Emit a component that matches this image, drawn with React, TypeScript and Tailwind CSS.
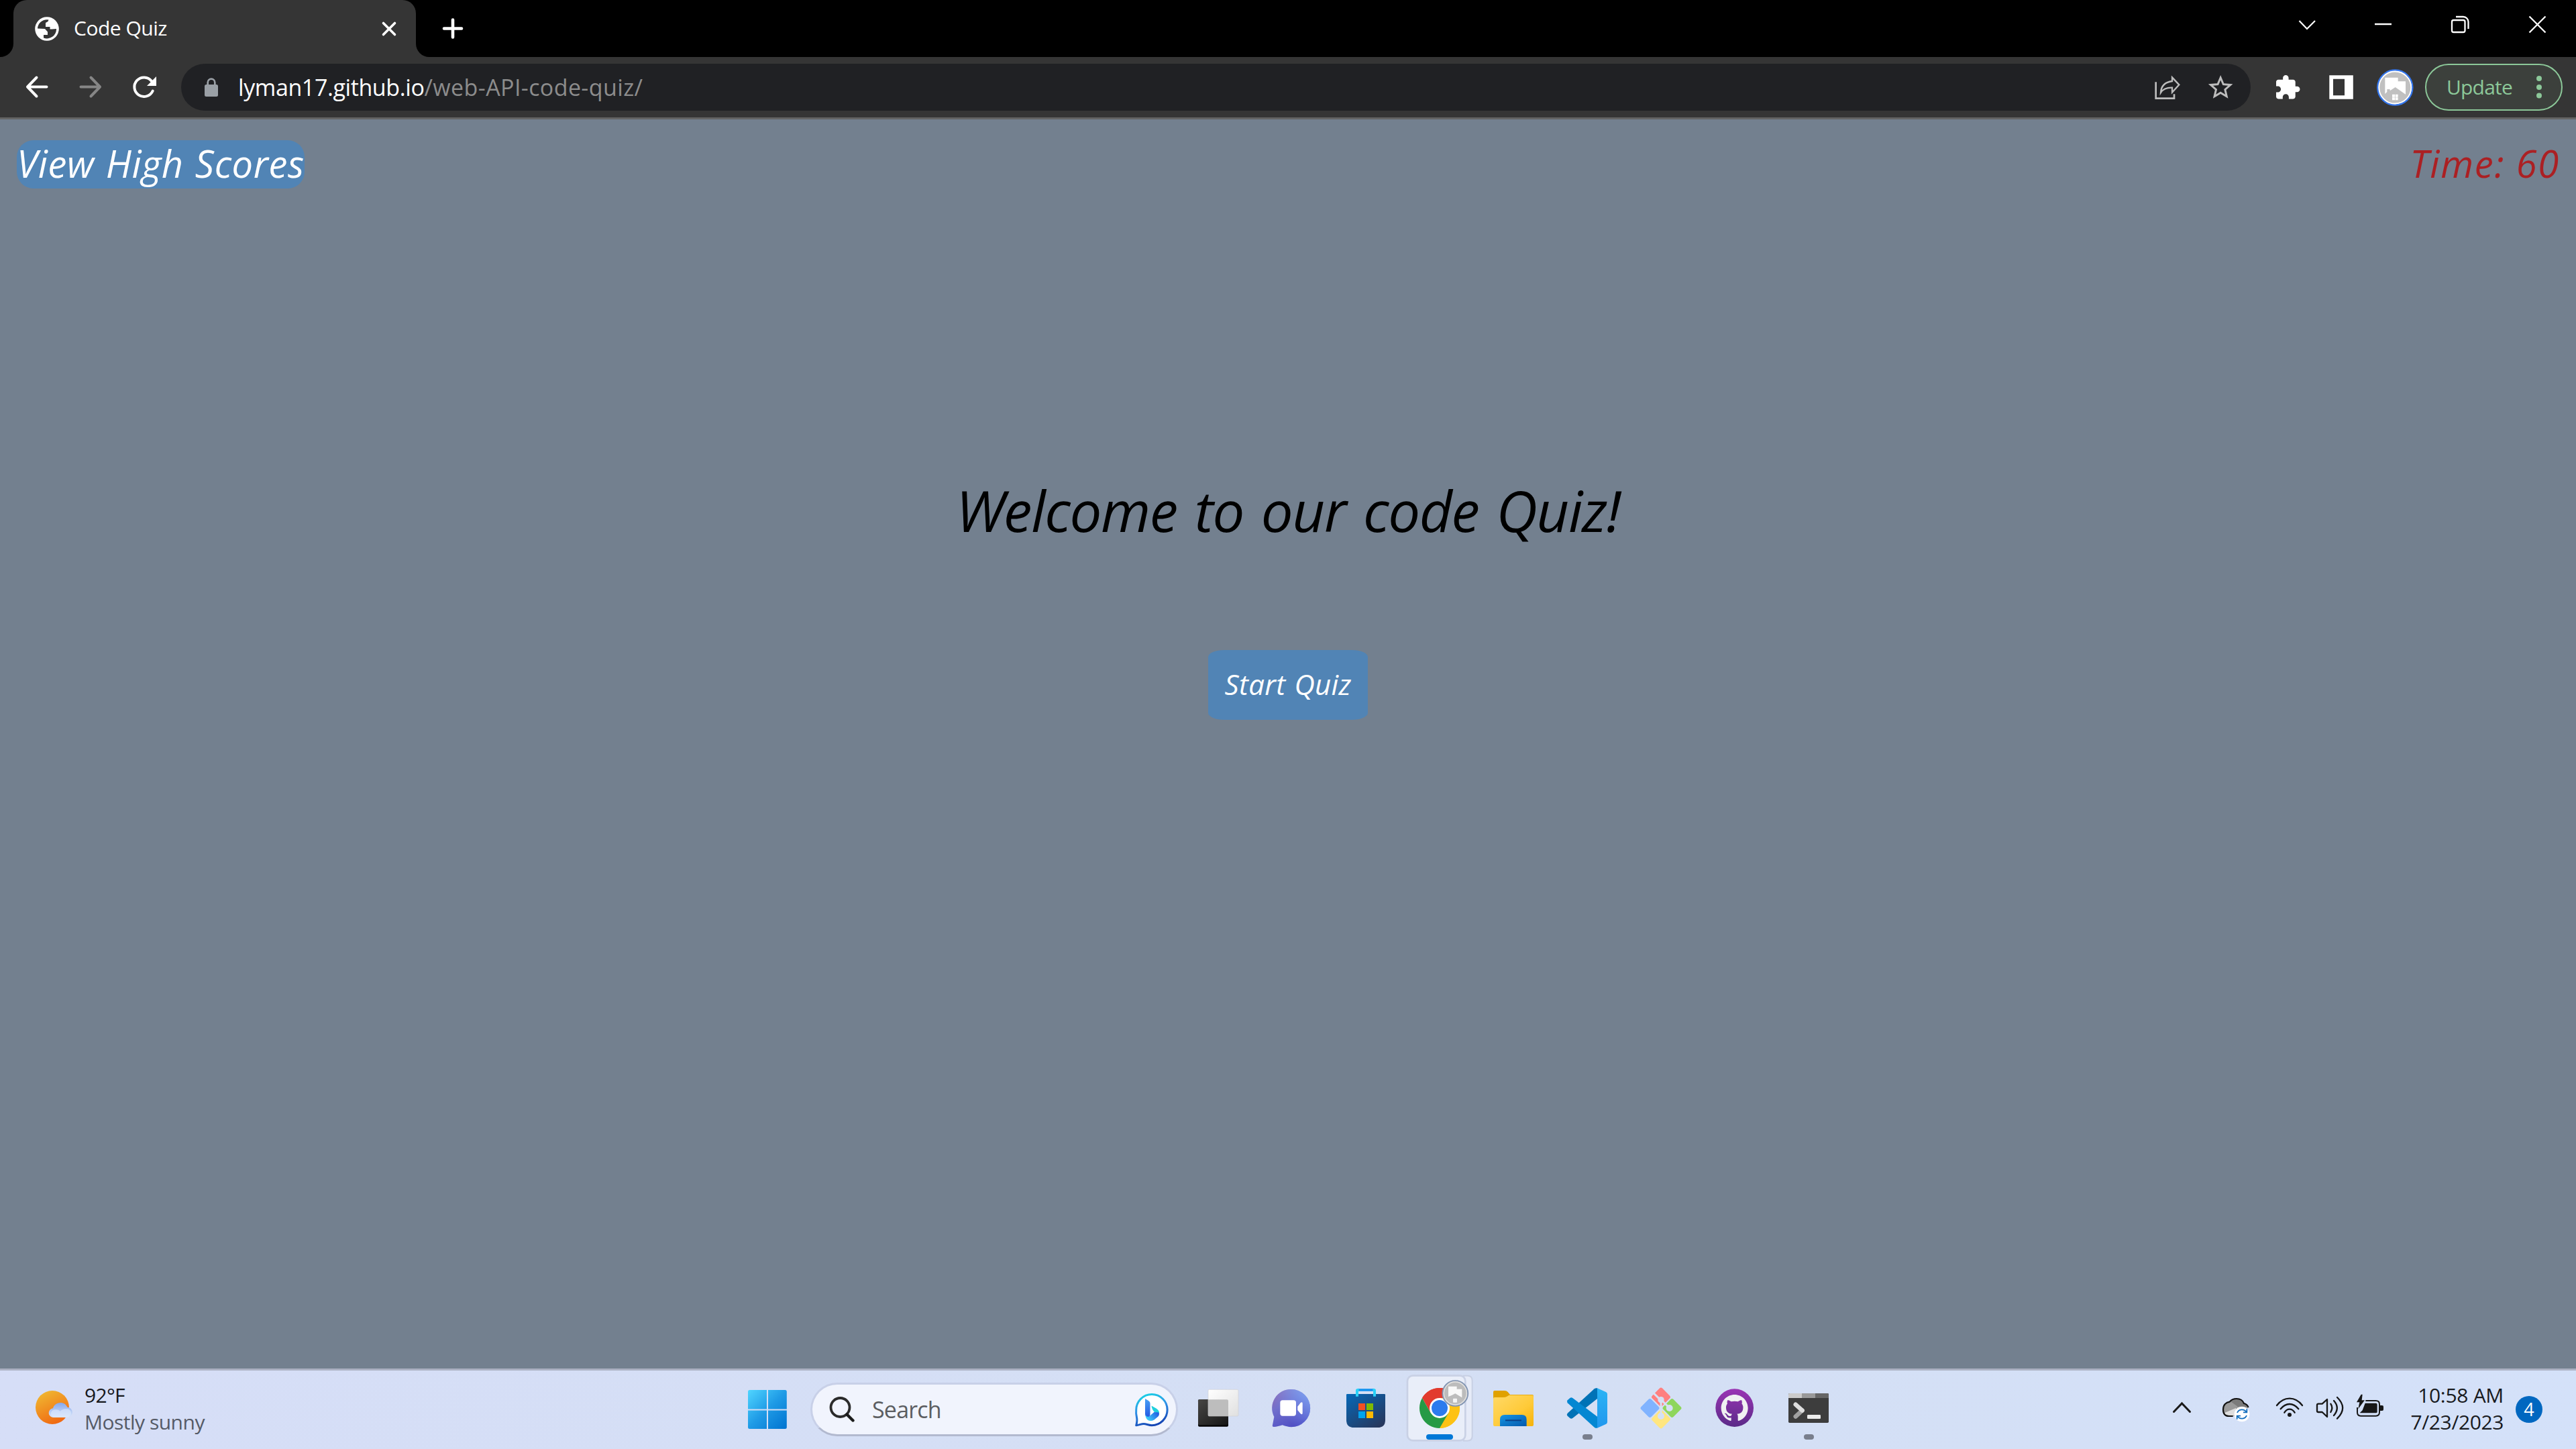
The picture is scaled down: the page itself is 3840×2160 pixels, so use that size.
import React from "react";

type IconProps = { box: string; className: string; children: React.ReactNode };

const Icon = ({ box, className, children }: IconProps) => (
  <svg viewBox={box} className={`block shrink-0 ${className}`} fill="none">
    {children}
  </svg>
);

const CELL = "w-[110px] h-[117px]";

const TabStrip = () => (
  <div className="flex h-[85px] w-full bg-black">
    <div className="relative ml-[20px] flex h-[85px] w-[600px] shrink-0 items-center rounded-t-[20px] bg-[#353535] pl-[32px]">
      <svg viewBox="0 0 20 20" className="absolute bottom-0 -left-[20px] h-[20px] w-[20px]">
        <path d="M20 0V20H0A20 20 0 0 0 20 0z" fill="#353535" />
      </svg>
      <svg viewBox="0 0 20 20" className="absolute -right-[20px] bottom-0 h-[20px] w-[20px]">
        <path d="M0 0V20H20A20 20 0 0 1 0 0z" fill="#353535" />
      </svg>
      <Icon box="52 25 36 36" className="h-[36px] w-[36px]">
        <circle cx="70" cy="43" r="17.8" fill="#fff" />
        <path d="M56 42.5A14 14 0 0 1 70 29.3l2.5.3-1 2.5-3.5 2v6h6.5v3.5h3l6.5-.5A14 14 0 0 1 65 56.5V52h6v-4.5l-4-4.5z" fill="#353535" />
      </Icon>
      <div className="ml-[22px] w-[458px] pb-[1px] text-[30px] leading-[40px] tracking-[-0.5px] whitespace-nowrap text-white">Code Quiz</div>
      <Icon box="0 0 24 24" className="h-[24px] w-[24px]">
        <path d="M3.5 3.5l17 17M20.5 3.5l-17 17" stroke="#fff" strokeWidth="3.6" strokeLinecap="round" />
      </Icon>
    </div>
    <Icon box="655 22 40 40" className="mt-[22px] ml-[35px] h-[40px] w-[40px]">
      <path d="M662 42.5h26M675 29.5v26" stroke="#fff" strokeWidth="4.6" strokeLinecap="round" />
    </Icon>
    <div className="ml-auto flex pt-[16px] pr-[37px]">
      <Icon box="3419 16 40 40" className="mr-[74px] h-[40px] w-[40px]">
        <path d="M3427.5 31l11.5 12 12-12" stroke="#fff" strokeWidth="2.2" />
      </Icon>
      <Icon box="3533 16 40 40" className="mr-[74px] h-[40px] w-[40px]">
        <path d="M3540 36h25" stroke="#fff" strokeWidth="2.5" />
      </Icon>
      <Icon box="3647 16 40 40" className="mr-[76px] h-[40px] w-[40px]">
        <rect x="3655" y="30" width="19.5" height="18" rx="2.5" stroke="#fff" strokeWidth="2.3" />
        <path d="M3661 25h11a7.5 7.5 0 0 1 7.5 7.5V43" stroke="#fff" strokeWidth="2.3" />
      </Icon>
      <Icon box="3763 16 40 40" className="h-[40px] w-[40px]">
        <path d="M3770.5 24.5l24 24M3794.5 24.5l-24 24" stroke="#fff" strokeWidth="2.3" />
      </Icon>
    </div>
  </div>
);

const Toolbar = () => (
  <div className="flex h-[93px] w-full items-start border-b-[3px] border-[#646464] bg-[#353535] pt-[10px]">
    <Icon box="35 95 40 70" className="ml-[35px] h-[70px] w-[40px]">
      <path d="M54.5 115.5L41 129.5l13.5 14M41 129.5h28.5" stroke="#fff" strokeWidth="4" strokeLinecap="round" strokeLinejoin="round" />
    </Icon>
    <Icon box="115 95 40 70" className="ml-[40px] h-[70px] w-[40px]">
      <path d="M135.5 115.5L149 129.5l-13.5 14M149 129.5h-28.5" stroke="#868686" strokeWidth="4" strokeLinecap="round" strokeLinejoin="round" />
    </Icon>
    <Icon box="195 95 40 70" className="ml-[40px] h-[70px] w-[40px]">
      <path d="M227.7 135.5A14.3 14.3 0 1 1 226 121" stroke="#fff" strokeWidth="4" strokeLinecap="round" />
      <path d="M233 114v14h-14z" fill="#fff" />
    </Icon>
    <div className="ml-[35px] flex h-[70px] w-[3085px] items-center rounded-full bg-[#202124] pl-[33px]">
      <Icon box="303 113 24 34" className="h-[34px] w-[24px]">
        <rect x="305" y="126" width="20" height="18" rx="2.5" fill="#9aa0a6" />
        <path d="M309.7 128v-5a5.3 5.3 0 0 1 10.6 0v5" stroke="#9aa0a6" strokeWidth="2.7" />
      </Icon>
      <div className="ml-[28px] w-[2848px] text-[34px] leading-[50px] whitespace-nowrap">
        <span className="tracking-[-0.4px] text-white">lyman17.github.io</span>
        <span className="tracking-[0.4px] text-[#8c8c8c]">/web-API-code-quiz/</span>
      </div>
      <Icon box="3190 80 167 100" className="-ml-[13px] h-[100px] w-[167px]">
        <g transform="translate(3192 80) scale(.33333)">
          <path d="M71 127v73h82v-19" stroke="#bdbdbd" strokeWidth="8" />
          <path d="M144 106l31 33-31 34v-21c-26-1-40 5-51 22 2-31 18-47 51-51z" stroke="#bdbdbd" strokeWidth="7" />
        </g>
        <path transform="translate(3290.2 108.4) scale(1.83)" d="M22 9.24l-7.19-.62L12 2 9.19 8.63 2 9.24l5.46 4.73L5.82 21 12 17.27 18.18 21l-1.63-7.03L22 9.24zM12 15.4l-3.76 2.27 1-4.28-3.32-2.88 4.38-.38L12 6.1l1.71 4.04 4.38.38-3.32 2.88 1 4.28L12 15.4z" fill="#bdbdbd" />
      </Icon>
    </div>
    <Icon box="3385 95 50 70" className="ml-[30px] h-[70px] w-[50px]">
      <path transform="translate(3389.6 110.2) scale(1.69)" d="M20.5 11H19V7c0-1.1-.9-2-2-2h-4V3.5C13 2.12 11.88 1 10.5 1S8 2.12 8 3.5V5H4c-1.1 0-1.99.9-1.99 2v3.8H3.5c1.49 0 2.7 1.21 2.7 2.7s-1.21 2.7-2.7 2.7H2V20c0 1.1.9 2 2 2h3.8v-1.5c0-1.49 1.21-2.7 2.7-2.7 1.49 0 2.7 1.21 2.7 2.7V22H17c1.1 0 2-.9 2-2v-4h1.5c1.38 0 2.5-1.12 2.5-2.5S21.88 11 20.5 11z" fill="#fff" />
    </Icon>
    <Icon box="3465 95 50 70" className="ml-[30px] h-[70px] w-[50px]">
      <path fillRule="evenodd" d="M3472.3 112.3h35.5v35.5h-35.5zM3478 117.7v24.6h17v-24.6z" fill="#fff" />
    </Icon>
    <Icon box="3540 95 60 70" className="ml-[25px] h-[70px] w-[60px]">
      <circle cx="3570.3" cy="130.5" r="26" fill="#c0c0c0" stroke="#3577ee" strokeWidth="2.4" />
      <circle cx="3570.3" cy="130.5" r="24" stroke="#fff" strokeWidth="1.8" />
      <g transform="translate(3190 80) scale(.33333)" fill="#fff">
        <path d="M1096 107h58v17h34v58l-46-32-24 16v-7h-13v12l-9 9z" />
        <path d="M1128 182h12v12h-12zM1142 182h12v12h-12zM1128 196h12v12h-12zM1142 196h12v12h-12z" />
      </g>
    </Icon>
    <div className="ml-[15px] flex h-[70px] w-[205px] items-center rounded-full border-[2.5px] border-[#8cc899] bg-[#3c403c] pl-[30px]">
      <div className="w-[100px] pb-[1px] text-[30px] leading-[40px] tracking-[-0.8px] whitespace-nowrap text-[#8cc899]">Update</div>
      <Icon box="0 0 16 50" className="ml-[30px] h-[50px] w-[16px]">
        <circle cx="8" cy="12" r="4" fill="#8cc899" />
        <circle cx="8" cy="25" r="4" fill="#8cc899" />
        <circle cx="8" cy="37.5" r="4" fill="#8cc899" />
      </Icon>
    </div>
  </div>
);

const QuizPage = () => (
  <main className="flex h-[1862px] w-full flex-col bg-[#73808f] pt-[31px]">
    <div className="flex h-[72px] justify-between pr-[24px] pl-[25px] text-[56px] leading-[68px] font-medium whitespace-nowrap italic">
      <div className="flex h-[72px] w-[429px] justify-center rounded-[25px] bg-[#5184b5] tracking-[0.6px] text-white [word-spacing:2px]">View High Scores</div>
      <div className="tracking-[1.8px] text-[#ab2023]">Time: 60</div>
    </div>
    <h1 className="mt-[419px] h-[120px] text-center text-[85px] leading-[120px] tracking-[-1.3px] whitespace-nowrap text-black italic [word-spacing:5px]">Welcome to our code Quiz!</h1>
    <div className="mt-[149px] flex justify-center">
      <button className="block h-[104px] w-[238px] rounded-[10%] bg-[#5184b5] pb-[3px] text-center text-[42px] leading-[101px] font-medium tracking-[0.3px] whitespace-nowrap text-white italic [word-spacing:2px]">Start Quiz</button>
    </div>
  </main>
);

const SearchBox = () => (
  <div className="ml-[9px] flex h-[80px] w-[548px] shrink-0 items-center rounded-full border-[3px] border-[#c8d0e8] border-b-[#b2b9cf] bg-[#f1f4fd] pl-[24px]">
    <Icon box="1235 2080 40 40" className="h-[40px] w-[40px]">
      <circle cx="1252.5" cy="2097" r="14" stroke="#2b2b2b" strokeWidth="3.8" />
      <path d="M1262.5 2107.5l9 9" stroke="#1b1b1b" strokeWidth="4.4" strokeLinecap="round" />
    </Icon>
    <div className="ml-[25px] w-[389px] text-[34px] leading-[48px] tracking-[-0.8px] whitespace-nowrap text-[#5b5d61]">Search</div>
    <Icon box="1690 2073 54 54" className="h-[54px] w-[54px]">
      <defs>
        <linearGradient id="bingRing" gradientUnits="userSpaceOnUse" x1="1697" y1="2078" x2="1712" y2="2126">
          <stop stopColor="#19d8e6" />
          <stop offset=".5" stopColor="#2f8fe6" />
          <stop offset="1" stopColor="#1546b5" />
        </linearGradient>
        <linearGradient id="bingB" gradientUnits="userSpaceOnUse" x1="1708" y1="2084" x2="1714" y2="2114">
          <stop stopColor="#4aa3f5" />
          <stop offset="1" stopColor="#1f51e0" />
        </linearGradient>
        <linearGradient id="bingC" gradientUnits="userSpaceOnUse" x1="1714" y1="2116" x2="1729" y2="2104">
          <stop stopColor="#3cc8f8" />
          <stop offset="1" stopColor="#1f4fe0" />
        </linearGradient>
      </defs>
      <path d="M1718 2077.5a23 23 0 0 1 0 46.2c-5 0-8-2.2-12-2.2-4 0-7 1.8-11.3 2.3 1.3-5 1.5-9 .8-12A30 30 0 0 1 1694.7 2101a23.3 23.3 0 0 1 23.3-23.5z" fill="#fff" stroke="url(#bingRing)" strokeWidth="3" strokeLinejoin="round" />
      <path d="M1708 2084l5 3q2.5 1.5 2.5 4v16q0 5-3.5 5t-4-5z" fill="url(#bingB)" />
      <path d="M1717.500 2094.500l7 4q5 3 4.500 8l-7-2.500q-4-4-4.500-9.500z" fill="#1fd0dd" />
      <path d="M1708.500 2108q2 4.500 6 2l7-6 6.500.5q2 3-.5 6l-6 5q-5.500 3-10 0-3-2.500-3-7.500z" fill="url(#bingC)" />
    </Icon>
  </div>
);

const TaskIcons = () => (
  <>
    <Icon box="1761 2043 110 117" className={`ml-[5px] ${CELL}`}>
      <defs>
        <linearGradient id="tv" x1="0" y1="0" x2="1" y2="1">
          <stop stopColor="#484745" />
          <stop offset="1" stopColor="#151515" />
        </linearGradient>
        <linearGradient id="tvW" x1="0" y1="0" x2="1" y2="1">
          <stop stopColor="#fff" />
          <stop offset="1" stopColor="#e0e0e0" />
        </linearGradient>
      </defs>
      <g transform="translate(1760 2030) scale(.33333)">
        <rect x="78" y="172" width="135" height="121" rx="6" fill="#050505" />
        <rect x="78" y="171" width="135" height="115" rx="6" fill="url(#tv)" />
        <rect x="123" y="127" width="135" height="119" rx="5" fill="url(#tvW)" stroke="#d0d0d4" strokeWidth="2" />
        <path d="M123 172h84q6 0 6 6v68h-85q-5 0-5-5z" fill="#bdbdbd" />
      </g>
    </Icon>
    <Icon box="1871 2043 110 117" className={CELL}>
      <defs>
        <linearGradient id="chat" x1="0" y1="0" x2=".5" y2="1">
          <stop stopColor="#9b68a8" />
          <stop offset=".45" stopColor="#7170cc" />
          <stop offset="1" stopColor="#5150c4" />
        </linearGradient>
        <linearGradient id="chatHi" x1="1" y1="0" x2=".3" y2=".7">
          <stop stopColor="#80aaf5" />
          <stop offset="1" stopColor="#6f8df0" stopOpacity="0" />
        </linearGradient>
      </defs>
      <g transform="translate(1760 2030) scale(.33333)">
        <path d="M495 126a84 84 0 0 1 0 169c-14 0-26-4-40-9-13 4-26 8-38 8-6 0-8-3-6-9l7-36A84 84 0 0 1 495 126z" fill="url(#chat)" />
        <path d="M495 126a84 84 0 0 1 0 169c-14 0-26-4-40-9l-37-37A84 84 0 0 1 495 126z" fill="url(#chatHi)" />
        <rect x="445" y="175" width="71" height="70" rx="11" fill="#fff" />
        <path d="M523 203l13-16q9-7 9 3v42q0 10-9 3l-13-16z" fill="#fff" />
      </g>
    </Icon>
    <Icon box="1981 2043 110 117" className={CELL}>
      <defs>
        <linearGradient id="store" x1="0" y1="0" x2=".8" y2="1">
          <stop stopColor="#0668b8" />
          <stop offset="1" stopColor="#27385e" />
        </linearGradient>
      </defs>
      <g transform="translate(1760 2030) scale(.33333)">
        <path d="M745 147h166q4 0 4 4v112q0 34-34 34H775q-34 0-34-34V151q0-4 4-4z" fill="url(#store)" />
        <path d="M795 129h67" stroke="#1493f0" strokeWidth="11" />
        <path d="M789 158v-28q0-2 8-2M867 158v-28q0-2-8-2" stroke="#2ad2f8" strokeWidth="12" />
        <path d="M795 189h30v30h-30z" fill="#f25022" />
        <path d="M831 189h30v30h-30z" fill="#7fba00" />
        <path d="M795 225h30v30h-30z" fill="#00a4ef" />
        <path d="M831 225h30v30h-30z" fill="#ffb900" />
      </g>
    </Icon>
    <Icon box="2091 2043 110 117" className={CELL}>
      <g transform="translate(1760 2030) scale(.33333)">
        <path d="M1266 65h16q22 0 22 22v249q0 20-22 20h-16z" fill="#e6ebf8" stroke="#c8d0e4" strokeWidth="6" />
        <rect x="1014" y="65" width="259" height="290" rx="24" fill="#e9eef9" stroke="#c9d1e5" strokeWidth="8" />
        <path d="M1158 210L1080 165A90 90 0 0 1 1236 165z" fill="#e23b2e" />
        <path d="M1158 210L1236 165A90 90 0 0 1 1158 300z" fill="#fdc214" />
        <path d="M1158 165h78A90 90 0 0 0 1080 165l39 68z" fill="#e23b2e" />
        <path d="M1236 165h-78l39 68-39 67A90 90 0 0 0 1236 165z" fill="#fdc214" />
        <path d="M1080 165A90 90 0 0 0 1158 300l39-67-78 0z" fill="#269a45" />
        <circle cx="1158" cy="210" r="45" fill="#fff" />
        <circle cx="1158" cy="210" r="36" fill="#2c7bee" />
        <circle cx="1228" cy="144" r="57" fill="#bcbcbc" stroke="#7f93b3" strokeWidth="5" />
        <circle cx="1228" cy="144" r="51" stroke="#e2e2e2" strokeWidth="4" />
        <path d="M1197 113h38v12h23v38l-30-18-16 8-15 6z" fill="#f8f8f8" />
        <rect x="1218" y="167" width="18" height="18" rx="3" fill="#f4f4f4" />
        <rect x="1098" y="327" width="120" height="24" rx="12" fill="#0078d7" />
      </g>
    </Icon>
    <Icon box="2201 2043 110 117" className={CELL}>
      <defs>
        <linearGradient id="fold" x1="0" y1="0" x2="1" y2="1">
          <stop stopColor="#ffd968" />
          <stop offset=".6" stopColor="#ffca38" />
          <stop offset="1" stopColor="#f5b20a" />
        </linearGradient>
        <linearGradient id="foldB" x1="0" y1="0" x2="1" y2="1">
          <stop stopColor="#1496e4" />
          <stop offset="1" stopColor="#0458ac" />
        </linearGradient>
      </defs>
      <g transform="translate(2230 2030) scale(.33333)">
        <path d="M-12 180v-42q0-6 6-6H38q10 0 15 6l10 12h99q6 0 6 6v24z" fill="#e0a100" />
        <path d="M-12 168q0-6 6-6H32q11 0 17-4l10-6h103q6 0 6 6v127q0 6-6 6H-6q-6 0-6-6z" fill="url(#fold)" />
        <path d="M18 291v-30q0-21 21-21h77q21 0 21 21v30z" fill="url(#foldB)" />
        <path d="M42 265h72" stroke="#0a3f86" strokeWidth="6" />
      </g>
    </Icon>
    <Icon box="2311 2043 110 117" className={CELL}>
      <defs>
        <linearGradient id="vs" x1="0" y1="0" x2="0" y2="1">
          <stop stopColor="#2ab4f5" />
          <stop offset="1" stopColor="#2197ee" />
        </linearGradient>
      </defs>
      <g transform="translate(2230 2030) scale(.33333)">
        <path d="M320 233L440 124q6-5 13-3v47L343 255q-6 4-12 0l-11-10q-5-6 0-12z" fill="#0072b6" />
        <path d="M320 187L440 296q6 5 13 3v-51L343 165q-6-4-12 0l-11 10q-5 6 0 12z" fill="#0487d2" />
        <path d="M453 121l40 18q5 3 5 8v126q0 5-5 8l-40 18z" fill="url(#vs)" />
        <rect x="387" y="327" width="45" height="24" rx="12" fill="#797f8d" />
      </g>
    </Icon>
    <Icon box="2421 2043 110 117" className={CELL}>
      <g transform="translate(2230 2030) scale(.33333)">
        <g transform="translate(738 210) rotate(45)">
          <rect x="-67" y="-67" width="64" height="64" rx="9" fill="#ff8080" />
          <rect x="3" y="-67" width="64" height="64" rx="9" fill="#8ed65c" />
          <rect x="-67" y="3" width="64" height="64" rx="9" fill="#80b3ff" />
          <rect x="3" y="3" width="64" height="64" rx="9" fill="#ffe680" />
        </g>
        <g stroke="#d5e0f4" strokeWidth="9">
          <path d="M704 142l34 34M738 170v72M742 176l33 33" />
        </g>
        <circle cx="738" cy="173" r="14" fill="#d5e0f4" />
        <circle cx="776" cy="210" r="15" fill="#d5e0f4" />
        <circle cx="738" cy="246" r="15" fill="#d5e0f4" />
      </g>
    </Icon>
    <Icon box="2531 2043 110 117" className={CELL}>
      <defs>
        <linearGradient id="gh" x1="0" y1="0" x2="0" y2="1">
          <stop stopColor="#9a34b4" />
          <stop offset="1" stopColor="#5a2a88" />
        </linearGradient>
      </defs>
      <g transform="translate(2230 2030) scale(.33333)">
        <circle cx="1067" cy="209" r="85" fill="url(#gh)" />
        <path transform="translate(1007 150) scale(7.5)" d="M8 0C3.58 0 0 3.58 0 8c0 3.54 2.29 6.53 5.47 7.59.4.07.55-.17.55-.38 0-.19-.01-.82-.01-1.49-2.01.37-2.53-.49-2.69-.94-.09-.23-.48-.94-.82-1.13-.28-.15-.68-.52-.01-.53.63-.01 1.08.58 1.23.82.72 1.21 1.87.87 2.33.66.07-.52.28-.87.51-1.07-1.78-.2-3.64-.89-3.64-3.95 0-.87.31-1.59.82-2.15-.08-.2-.36-1.02.08-2.12 0 0 .67-.21 2.2.82.64-.18 1.32-.27 2-.27.68 0 1.36.09 2 .27 1.53-1.04 2.2-.82 2.2-.82.44 1.1.16 1.92.08 2.12.51.56.82 1.27.82 2.15 0 3.07-1.87 3.75-3.65 3.95.29.25.54.73.54 1.48 0 1.07-.01 1.93-.01 2.2 0 .21.15.46.55.38A8.013 8.013 0 0 0 16 8c0-4.42-3.58-8-8-8z" fill="#f0f0f2" />
      </g>
    </Icon>
    <Icon box="2641 2043 110 117" className={CELL}>
      <g transform="translate(2230 2030) scale(.33333)">
        <rect x="1308" y="144" width="180" height="132" rx="5" fill="#3d3d3d" />
        <path d="M1313 144h55v21h-60v-16q0-5 5-5z" fill="#cbcbcb" />
        <path d="M1368 144h60v21h-60z" fill="#999" />
        <path d="M1428 144h55q5 0 5 5v16h-60z" fill="#666" />
        <path d="M1340 248l30-28" stroke="#a2a2a2" strokeWidth="19" strokeLinecap="round" />
        <path d="M1340 194l30 27" stroke="#dedede" strokeWidth="19" strokeLinecap="round" />
        <rect x="1392" y="240" width="60" height="18" rx="4" fill="#ececec" />
        <rect x="1377" y="327" width="45" height="24" rx="12" fill="#797f8d" />
      </g>
    </Icon>
  </>
);

const Tray = () => (
  <div className="flex h-[117px] shrink-0 items-center">
    <Icon box="3229 2043 48 117" className="h-[117px] w-[48px]">
      <path d="M3240.5 2105.5l12-12.5 12 12.5" stroke="#1a1a1a" strokeWidth="3" strokeLinecap="round" />
    </Icon>
    <Icon box="3305 2043 60 117" className="ml-[28px] h-[117px] w-[60px]">
      <g transform="translate(3220 2050) scale(.33333)">
        <path d="M308 186c-18 0-26-12-26-30 0-20 13-32 29-34 8-10 19-14 31-14 16 0 28 8 33 21 10 3 17 9 20 18l-40 39z" fill="#9a9a9a" />
        <path d="M316 121c8-9 17-12 26-12 16 0 28 8 33 21 8 2 14 6 18 12l-30 14-26-20z" fill="#7b7b7b" />
        <path d="M287 172l52-22 10 34h-41c-11 0-18-4-21-12z" fill="#dedede" />
        <path d="M326 186h-18c-18 0-26-12-26-30 0-20 13-32 29-34 8-10 19-14 31-14 16 0 28 8 33 21 10 3 17 9 20 18" stroke="#111" strokeWidth="6.5" />
        <circle cx="366" cy="177" r="34" fill="#fff" />
        <path d="M345 171c6-16 30-20 41-3M387 183c-6 16-30 20-41 3" stroke="#0f6cbd" strokeWidth="5.5" />
        <path d="M388 154v15h-16M344 200v-15h16" stroke="#0f6cbd" strokeWidth="5.5" />
      </g>
    </Icon>
    <Icon box="3385 2043 180 117" className="ml-[20px] h-[117px] w-[180px]">
      <g transform="translate(3220 2050) scale(.33333)" stroke="#171717" strokeWidth="7" strokeLinecap="round">
        <path d="M522 138q24-31 57-31t57 31M539 154q18-22 40-22t40 22M556 170q9-15 23-15t23 15" />
        <circle cx="579" cy="180" r="9" fill="#171717" stroke="none" />
        <path d="M747 111v78l-22-21h-17q-6 0-6-6v-25q0-6 6-6h17z" strokeLinejoin="round" />
        <path d="M763 131q12 18 0 37M777 117q29 32 0 66M792 102q49 47 0 95" />
        <path d="M919 117h46q16 0 16 16v36q0 16-16 16h-68q-15 0-15-16v-22" strokeLinecap="butt" strokeWidth="6" />
        <path d="M984 138h9q6 0 6 6v12q0 6-6 6h-9z" fill="#171717" stroke="none" />
        <path d="M917 128h48q6 0 6 6v33q0 5-6 5h-72l12-12z" fill="#171717" stroke="none" />
        <path d="M899 89l-20 35h13l-6 30 29-39h-13l3-26z" fill="#171717" stroke="none" />
      </g>
    </Icon>
    <div className="w-[167px] pb-[2px] text-right text-[30px] leading-[40px] whitespace-nowrap text-[#181a1e]">
      <div className="tracking-[-0.3px]">10:58 AM</div>
      <div className="tracking-[-0.4px]">7/23/2023</div>
    </div>
    <div className="mr-[50px] ml-[18px] flex h-[40px] w-[40px] items-center justify-center rounded-full bg-[#0067c0] pb-[1px] text-[27px] leading-none text-white">4</div>
  </div>
);

const Taskbar = () => (
  <div className="h-[120px] w-full border-t-[3px] border-[#abb1c2] bg-linear-to-r from-[#d6def7] via-[#d4dff4] via-60% to-[#d4e1f9]">
    <div className="flex h-[117px] w-full items-center pb-[2px]">
      <Icon box="50 2043 62 117" className="ml-[50px] h-[117px] w-[62px]">
        <defs>
          <linearGradient id="sun" x1=".2" y1="0" x2=".7" y2="1">
            <stop stopColor="#f0b932" />
            <stop offset="1" stopColor="#f06510" />
          </linearGradient>
          <linearGradient id="cloud" x1="0" y1="0" x2="0" y2="1">
            <stop stopColor="#86a8ec" />
            <stop offset="1" stopColor="#d9e6fb" />
          </linearGradient>
        </defs>
        <g transform="translate(0 2031) scale(.33333)">
          <circle cx="234" cy="204" r="75" fill="url(#sun)" />
          <path d="M240 249a20 20 0 0 1-3-41c3-14 16-25 33-25 15 0 26 8 31 20a23 23 0 0 1 0 46z" fill="url(#cloud)" />
          <path d="M245 248a17 17 0 0 1 0-34q15-2 24 7 12-13 31-10a18 18 0 0 1 0 36z" fill="#dce8fc" opacity=".65" />
        </g>
      </Icon>
      <div className="ml-[14px] w-[963px] shrink-0 pb-[2px] text-[30px] leading-[40px] whitespace-nowrap">
        <div className="tracking-[-0.7px] text-[#16181c]">92°F</div>
        <div className="tracking-[-0.5px] text-[#555a66]">Mostly sunny</div>
      </div>
      <Icon box="1089 2042 110 117" className={CELL}>
        <defs>
          <linearGradient id="win" gradientUnits="userSpaceOnUse" x1="1115" y1="2072" x2="1172" y2="2130">
            <stop stopColor="#50d5ff" />
            <stop offset=".5" stopColor="#1f9be6" />
            <stop offset="1" stopColor="#0073d0" />
          </linearGradient>
        </defs>
        <path d="M1117.5 2072h25.500v28.500h-28v-26q0-2.500 2.500-2.500zM1145 2072h25.300q2.500 0 2.500 2.500v26H1145zM1115 2102.500h28v27.500h-25.500q-2.500 0-2.500-2.500zM1145 2102.500h27.800v25q0 2.500-2.500 2.500H1145z" fill="url(#win)" />
      </Icon>
      <SearchBox />
      <TaskIcons />
      <div className="flex-1" />
      <Tray />
    </div>
  </div>
);

export default function App() {
  return (
    <div className="flex h-[2160px] w-[3840px] flex-col overflow-hidden font-['Open_Sans',sans-serif]">
      <TabStrip />
      <Toolbar />
      <QuizPage />
      <Taskbar />
    </div>
  );
}
